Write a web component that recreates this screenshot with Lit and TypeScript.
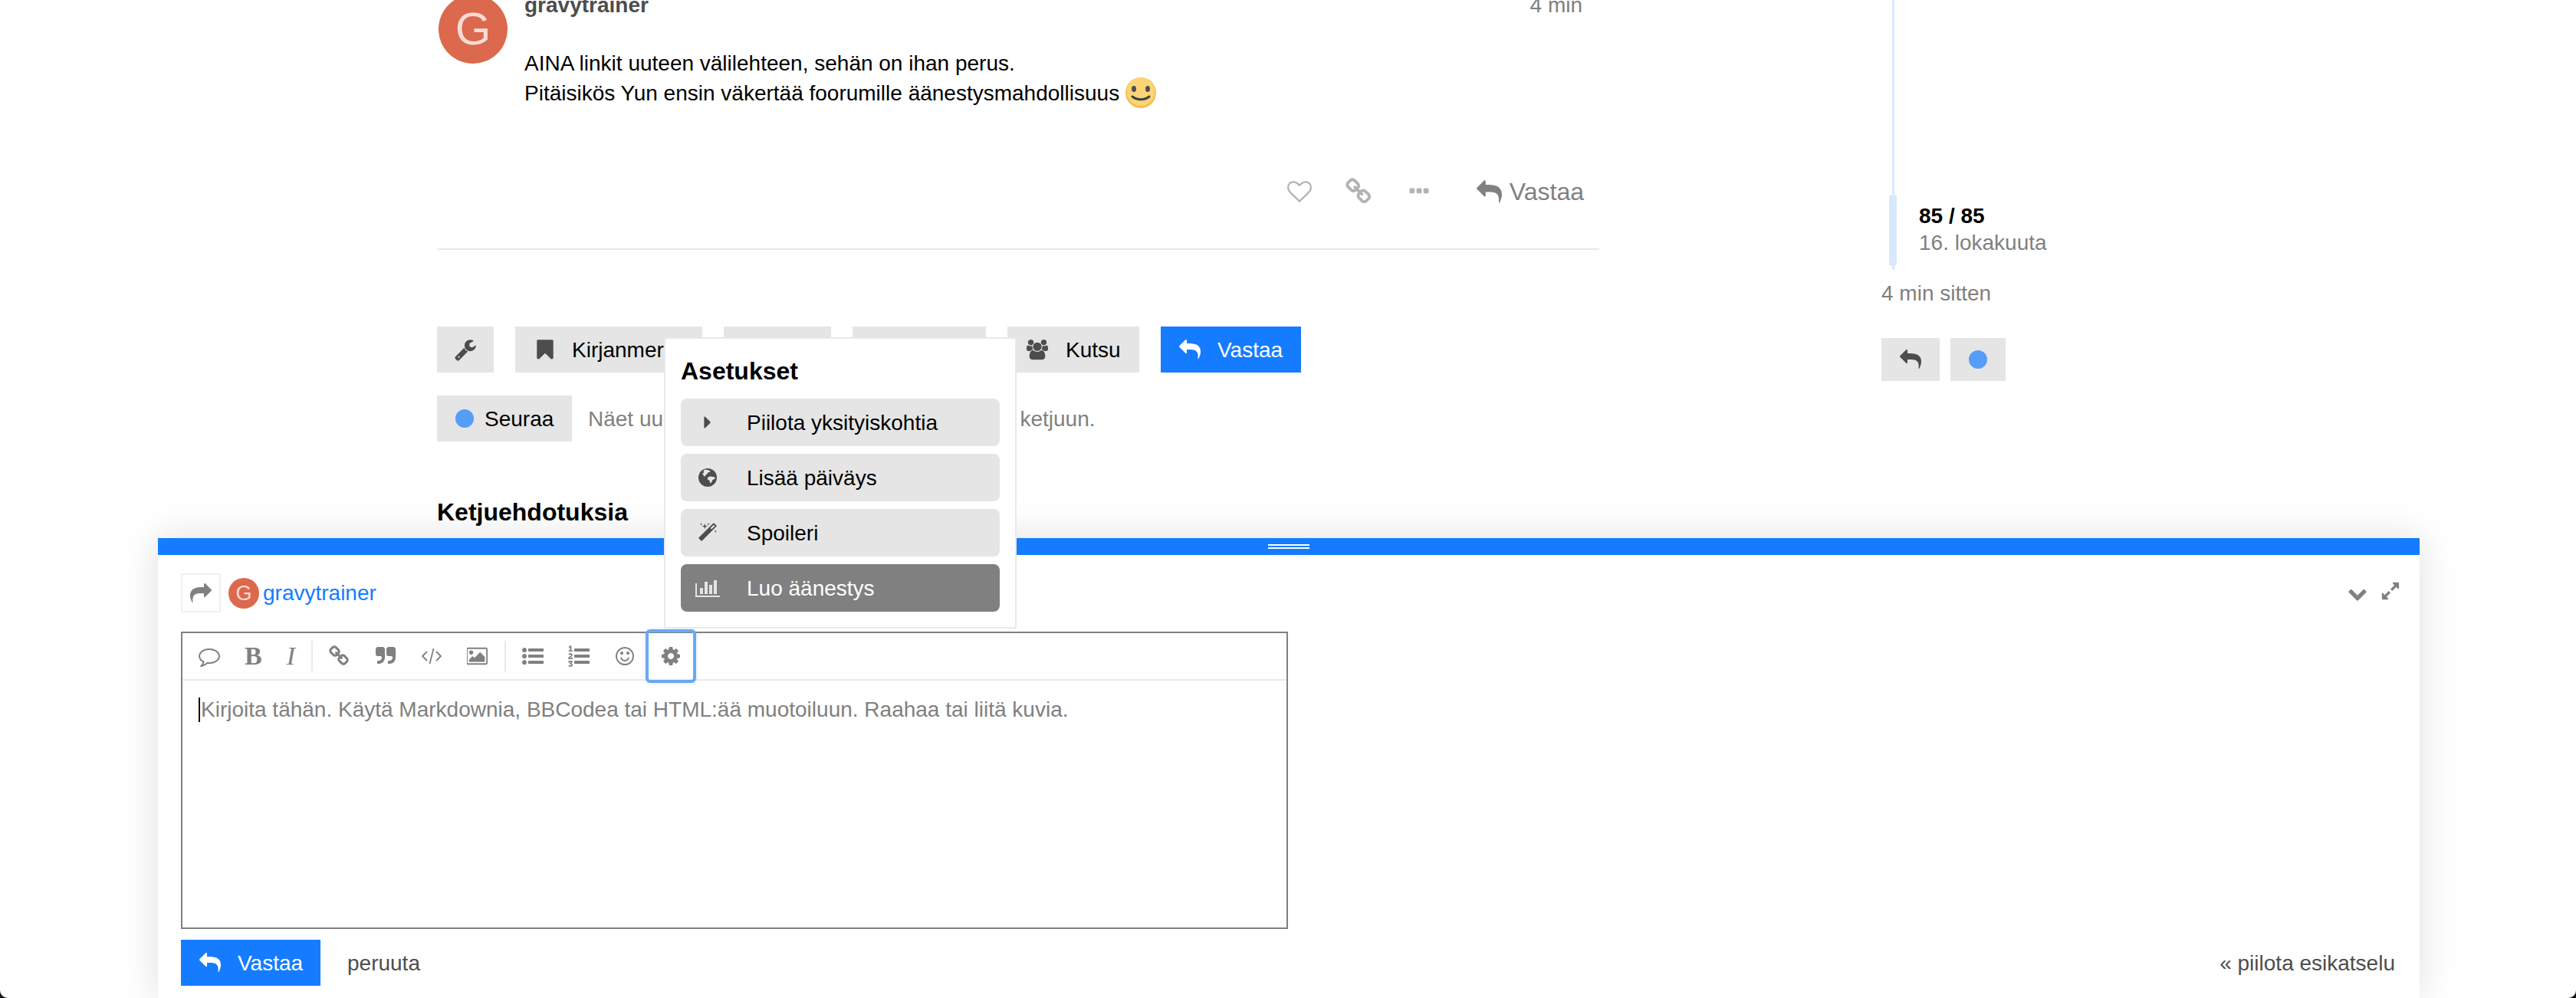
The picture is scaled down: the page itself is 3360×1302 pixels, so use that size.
import { LitElement, html, css } from 'lit';
import { customElement } from 'lit/decorators.js';

// Font Awesome 4 style glyphs, all on a 1792 grid unless a viewBox is given
const ICONS: Record<string, string> = {
  reply: 'M1792 1120q0 166-127 451-3 7-10.5 24t-13.5 30-13 22q-12 17-28 17-15 0-23.5-10t-8.5-25q0-9 2.5-26.5t2.5-23.5q5-68 5-123 0-101-17.5-181t-48.5-138.5-80-101-105.5-69.5-133-42.5-154-21.5-175.5-6h-224v256q0 26-19 45t-45 19-45-19l-512-512q-19-19-19-45t19-45l512-512q19-19 45-19t45 19 19 45v256h224q713 0 875 403 53 134 53 333z',
  share: 'M1792 640q0 26-19 45l-512 512q-19 19-45 19t-45-19-19-45v-256h-224q-98 0-175.5 6t-154 21.5-133 42.5-105.5 69.5-80 101-48.5 138.5-17.5 181q0 55 5 123 0 6 2.5 23.5t2.5 26.5q0 15-8.5 25t-23.5 10q-16 0-28-17-7-9-13-22t-13.5-30-10.5-24q-127-285-127-451 0-199 53-333 162-403 875-403h224v-256q0-26 19-45t45-19 45 19l512 512q19 19 19 45z',
  bookmark: 'M1420 128q23 0 44 9 33 13 52.5 41t19.5 62v1289q0 34-19.5 62t-52.5 41q-19 8-44 8-48 0-83-32l-441-424-441 424q-36 33-83 33-23 0-44-9-33-13-52.5-41t-19.5-62v-1289q0-34 19.5-62t52.5-41q21-9 44-9h1048z',
  wrench: 'M448 1472q0-26-19-45t-45-19-45 19-19 45 19 45 45 19 45-19 19-45zm644-420l-682 682q-37 37-90 37-52 0-91-37l-106-108q-38-36-38-90 0-53 38-91l681-681q39 98 114.5 173.5t173.5 114.5zm634-435q0 39-23 106-47 134-164.5 217.5t-258.5 83.5q-185 0-316.5-131.5t-131.5-316.5 131.5-316.5 316.5-131.5q58 0 121.5 16.5t107.5 46.5q16 11 16 28t-16 28l-293 169v224l193 107q5-3 79-48.5t135.5-81 70.5-35.5q15 0 23.5 10t8.5 25z',
  users: 'M529 896q-162 5-265 128h-134q-82 0-138-40.5t-56-118.5q0-353 124-353 6 0 43.5 21t97.5 42.5 119 21.5q67 0 133-23-5 37-5 66 0 139 81 256zm1071 637q0 120-73 189.5t-194 69.5h-874q-121 0-194-69.5t-73-189.5q0-53 3.5-103.5t14-109 26.5-108.5 43-97.5 62-81 85.5-53.5 111.5-20q10 0 43 21.5t73 48 107 48 135 21.5 135-21.5 107-48 73-48 43-21.5q61 0 111.5 20t85.5 53.5 62 81 43 97.5 26.5 108.5 14 109 3.5 103.5zm-1024-1277q0 106-75 181t-181 75-181-75-75-181 75-181 181-75 181 75 75 181zm704 384q0 159-112.5 271.5t-271.5 112.5-271.5-112.5-112.5-271.5 112.5-271.5 271.5-112.5 271.5 112.5 112.5 271.5zm576 225q0 78-56 118.5t-138 40.5h-134q-103-123-265-128 81-117 81-256 0-29-5-66 66 23 133 23 59 0 119-21.5t97.5-42.5 43.5-21q124 0 124 353zm-128-609q0 106-75 181t-181 75-181-75-75-181 75-181 181-75 181 75 75 181z',
  link: 'M1456 1216q0-40-28-68l-208-208q-28-28-68-28-42 0-72 32 3 3 19 18.5t21.5 21.5 15 19 13 25.5 3.5 27.5q0 40-28 68t-68 28q-15 0-27.5-3.5t-25.5-13-19-15-21.5-21.5-18.5-19q-33 31-33 73 0 40 28 68l206 207q27 27 68 27 40 0 68-26l147-146q28-28 28-67zm-703-705q0-40-28-68l-206-207q-28-28-68-28-39 0-68 27l-147 146q-28 28-28 67 0 40 28 68l208 208q27 27 68 27 42 0 72-31-3-3-19-18.5t-21.5-21.5-15-19-13-25.5-3.5-27.5q0-40 28-68t68-28q15 0 27.5 3.5t25.5 13 19 15 21.5 21.5 18.5 19q33-31 33-73zm895 705q0 120-85 203l-147 146q-83 83-203 83-121 0-204-85l-206-207q-83-83-83-203 0-123 88-209l-88-88q-86 88-208 88-120 0-204-84l-208-208q-84-84-84-204t85-203l147-146q83-83 203-83 121 0 204 85l206 207q83 83 83 203 0 123-88 209l88 88q86-88 208-88 120 0 204 84l208 208q84 84 84 204z',
  quote: 'M832 320v704q0 104-40.5 198.5t-109.5 163.5-163.5 109.5-198.5 40.5h-64q-26 0-45-19t-19-45v-128q0-26 19-45t45-19h64q106 0 181-75t75-181v-32q0-40-28-68t-68-28h-224q-80 0-136-56t-56-136v-384q0-80 56-136t136-56h384q80 0 136 56t56 136zm896 0v704q0 104-40.5 198.5t-109.5 163.5-163.5 109.5-198.5 40.5h-64q-26 0-45-19t-19-45v-128q0-26 19-45t45-19h64q106 0 181-75t75-181v-32q0-40-28-68t-68-28h-224q-80 0-136-56t-56-136v-384q0-80 56-136t136-56h384q80 0 136 56t56 136z',
  cog: 'M1152 896q0-106-75-181t-181-75-181 75-75 181 75 181 181 75 181-75 75-181zm512-109v222q0 12-8 23t-20 13l-185 28q-19 54-39 91 35 50 107 138 10 12 10 25t-9 23q-27 37-99 108t-94 71q-12 0-26-9l-138-108q-44 23-91 38-16 136-29 186-7 28-36 28h-222q-14 0-24.5-8.5t-11.5-21.5l-28-184q-49-16-90-37l-141 107q-10 9-25 9-14 0-25-11-126-114-165-168-7-10-7-23 0-12 8-23 15-21 51-66.5t54-70.5q-27-50-41-99l-183-27q-13-2-21-12.5t-8-23.5v-222q0-12 8-23t19-13l186-28q14-46 39-92-40-57-107-138-10-12-10-24 0-10 9-23 26-36 98.5-107.5t94.5-71.5q13 0 26 10l138 107q44-23 91-38 16-136 29-186 7-28 36-28h222q14 0 24.5 8.5t11.5 21.5l28 184q49 16 90 37l142-107q9-9 24-9 13 0 25 10 129 119 165 170 7 8 7 22 0 12-8 23-15 21-51 66.5t-54 70.5q26 50 41 98l183 28q13 2 21 12.5t8 23.5z',
  chevron: 'M1683 808l-742 741q-19 19-45 19t-45-19l-742-741q-19-19-19-45.5t19-45.5l166-165q19-19 45-19t45 19l531 531 531-531q19-19 45-19t45 19l166 165q19 19 19 45.5t-19 45.5z',
  caret: 'M1152 896q0 26-19 45l-448 448q-19 19-45 19t-45-19-19-45v-896q0-26 19-45t45-19 45 19l448 448q19 19 19 45z',
  magic: 'M1254 581l293-293-107-107-293 293zm447-293q0 27-18 45l-1286 1286q-18 18-45 18t-45-18l-198-198q-18-18-18-45t18-45l1286-1286q18-18 45-18t45 18l198 198q18 18 18 45zm-1351-190l98 30-98 30-30 98-30-98-98-30 98-30 30-98zm350 162l196 60-196 60-60 196-60-196-196-60 196-60 60-196zm930 478l98 30-98 30-30 98-30-98-98-30 98-30 30-98zm-640-640l98 30-98 30-30 98-30-98-98-30 98-30 30-98z',
  chart: 'M640 896v512h-256v-512h256zm384-512v1024h-256v-1024h256zm1024 1152v128h-2048v-1152h128v1024h1920zm-640-896v768h-256v-768h256zm384-384v1152h-256v-1152h256z',
  comment: 'M896 384q-204 0-381.5 69.5t-282 187.5-104.5 255q0 112 71.5 213.5t201.5 175.5l87 50-27 96q-24 91-70 172 152-63 275-171l43-38 57 6q69 8 130 8 204 0 381.5-69.5t282-187.5 104.5-255-104.5-255-282-187.5-381.5-69.5zm896 512q0 174-120 321.5t-326 233-450 85.5q-70 0-145-8-198 175-460 242-49 14-114 22h-5q-15 0-27-10.5t-16-27.5v-1q-3-4-.5-12t2-10 4.5-9.5l6-9 7-8.5 8-9q7-8 31-34.5t34.5-38 31-39.5 32.5-51 27-59 26-76q-157-89-247.5-220t-90.5-281q0-174 120-321.5t326-233 450-85.5 450 85.5 326 233 120 321.5z',
  image: 'M576 576q0 80-56 136t-136 56-136-56-56-136 56-136 136-56 136 56 56 136zm1024 384v448h-1408v-192l320-320 160 160 512-512zm96-704h-1600q-13 0-22.5 9.5t-9.5 22.5v1216q0 13 9.5 22.5t22.5 9.5h1600q13 0 22.5-9.5t9.5-22.5v-1216q0-13-9.5-22.5t-22.5-9.5zm160 32v1216q0 66-47 113t-113 47h-1600q-66 0-113-47t-47-113v-1216q0-66 47-113t113-47h1600q66 0 113 47t47 113z',
  listUl: 'M384 1408q0 80-56 136t-136 56-136-56-56-136 56-136 136-56 136 56 56 136zm0-512q0 80-56 136t-136 56-136-56-56-136 56-136 136-56 136 56 56 136zm1408 416v192q0 13-9.5 22.5t-22.5 9.5h-1216q-13 0-22.5-9.5t-9.5-22.5v-192q0-13 9.5-22.5t22.5-9.5h1216q13 0 22.5 9.5t9.5 22.5zm-1408-928q0 80-56 136t-136 56-136-56-56-136 56-136 136-56 136 56 56 136zm1408 416v192q0 13-9.5 22.5t-22.5 9.5h-1216q-13 0-22.5-9.5t-9.5-22.5v-192q0-13 9.5-22.5t22.5-9.5h1216q13 0 22.5 9.5t9.5 22.5zm0-512v192q0 13-9.5 22.5t-22.5 9.5h-1216q-13 0-22.5-9.5t-9.5-22.5v-192q0-13 9.5-22.5t22.5-9.5h1216q13 0 22.5 9.5t9.5 22.5z',
  listOl: 'M381 1620q0 80-54.5 126t-135.5 46q-106 0-172-66l57-88q49 45 106 45 29 0 50.5-14.5t21.5-42.5q0-64-105-56l-26-56q8-10 32.5-43.5t42.5-54 37-38.5v-1q-16 0-48.5 1t-48.5 1v53h-106v-152h333v88l-95 115q51 12 81 49t30 88zm2-627v159h-362q-6-36-6-54 0-51 23.5-93t56.5-68 66-47.5 56.5-43.5 23.5-45q0-25-14.5-38.5t-39.5-13.5q-46 0-81 58l-85-59q24-51 71.5-79.5t105.5-28.5q73 0 123 41.5t50 112.5q0 50-34 91.5t-75 64.5-75.5 50.5-35.5 52.5h127v-60h105zm1409 319v192q0 13-9.5 22.5t-22.5 9.5h-1216q-13 0-22.5-9.5t-9.5-22.5v-192q0-13 9.5-22.5t22.5-9.5h1216q13 0 22.5 9.5t9.5 22.5zm-1408-899v99h-335v-99h107q0-41 .5-122t.5-121v-12h-2q-8 17-50 54l-71-76 136-127h106v404h108zm1408 387v192q0 13-9.5 22.5t-22.5 9.5h-1216q-13 0-22.5-9.5t-9.5-22.5v-192q0-13 9.5-22.5t22.5-9.5h1216q13 0 22.5 9.5t9.5 22.5zm0-512v192q0 13-9.5 22.5t-22.5 9.5h-1216q-13 0-22.5-9.5t-9.5-22.5v-192q0-13 9.5-22.5t22.5-9.5h1216q13 0 22.5 9.5t9.5 22.5z',
  smile: 'M1262 1075q-37 121-138 195t-228 74-228-74-138-195q-8-25 4-48.5t38-31.5q25-8 48.5 4t31.5 38q25 80 92.5 129.5t151.5 49.5 151.5-49.5 92.5-129.5q8-26 32-38t49-4 37 31.5 4 48.5zm-494-435q0 53-37.5 90.5t-90.5 37.5-90.5-37.5-37.5-90.5 37.5-90.5 90.5-37.5 90.5 37.5 37.5 90.5zm512 0q0 53-37.5 90.5t-90.5 37.5-90.5-37.5-37.5-90.5 37.5-90.5 90.5-37.5 90.5 37.5 37.5 90.5zm256 256q0-130-51-248.5t-136.5-204-204-136.5-248.5-51-248.5 51-204 136.5-136.5 204-51 248.5 51 248.5 136.5 204 204 136.5 248.5 51 248.5-51 204-136.5 136.5-204 51-248.5zm128 0q0 209-103 385.5t-279.5 279.5-385.5 103-385.5-103-279.5-279.5-103-385.5 103-385.5 279.5-279.5 385.5-103 385.5 103 279.5 279.5 103 385.5z',
  heart: 'M1664 596q0-81-21.5-143t-55-98.5-81.5-59.5-94-31-98-8-112 25.5-110.5 64-86.5 72-60 61.5q-18 22-49 22t-49-22q-24-28-60-61.5t-86.5-72-110.5-64-112-25.5-98 8-94 31-81.5 59.5-55 98.5-21.5 143q0 168 187 355l581 560 580-559q188-188 188-356zm128 0q0 221-229 450l-623 600q-18 18-44 18t-44-18l-624-601q-10-8-27.5-26t-55.5-65.5-68-97.5-53.5-121-23.5-138q0-220 127-344t351-124q62 0 126.5 21.5t120 58 95.5 68.5 76 68q36-36 76-68t95.5-68.5 120-58 126.5-21.5q224 0 351 124t127 344z',
  dots: 'M576 736v192q0 40-28 68t-68 28h-192q-40 0-68-28t-28-68v-192q0-40 28-68t68-28h192q40 0 68 28t28 68zm512 0v192q0 40-28 68t-68 28h-192q-40 0-68-28t-28-68v-192q0-40 28-68t68-28h192q40 0 68 28t28 68zm512 0v192q0 40-28 68t-68 28h-192q-40 0-68-28t-28-68v-192q0-40 28-68t68-28h192q40 0 68 28t28 68z',
  expand: 'M883 1056q0 13-10 23l-332 332 144 144q19 19 19 45t-19 45-45 19h-448q-26 0-45-19t-19-45v-448q0-26 19-45t45-19 45 19l144 144 332-332q10-10 23-10t23 10l114 114q10 10 10 23zm781-864v448q0 26-19 45t-45 19-45-19l-144-144-332 332q-10 10-23 10t-23-10l-114-114q-10-10-10-23t10-23l332-332-144-144q-19-19-19-45t19-45 45-19h448q26 0 45 19t19 45z',
};

const fa = (name: string, cls = '', viewBox = '0 0 1792 1792') => html`
  <svg class="fa ${cls}" viewBox=${viewBox} aria-hidden="true"><path d=${ICONS[name]}></path></svg>
`;

const globe = html`
  <svg class="globe" viewBox="0 0 24 24" aria-hidden="true">
    <circle cx="12" cy="12" r="12" fill="#4d4d4d"></circle>
    <path fill="#e5e5e5" d="M8 1.5l4 .5 3.500 1.500-1 1.500-2.500.5-.5 2-2 1-.5 1.500-2 .5-.5-2-1.500-1 2-2-.5-1.500zM12 12l3-1.500 4 .5 3 1-1 2-2.500 1-1 2.500-1.500 2-1-1-.5-2.500-2.500-1.500z"></path>
  </svg>
`;

const smiley = html`
  <svg class="emoji" viewBox="0 0 40 40" aria-hidden="true">
    <circle cx="20" cy="20" r="20" fill="#f6bf50"></circle>
    <circle cx="20" cy="18.500" r="18.500" fill="#fbd476"></circle>
    <ellipse cx="11" cy="15" rx="3" ry="4" fill="#4a4f57"></ellipse>
    <ellipse cx="29" cy="15" rx="3" ry="4" fill="#4a4f57"></ellipse>
    <path d="M9 25c6 5 16 5 22 0" fill="none" stroke="#3c3f45" stroke-width="3" stroke-linecap="round"></path>
  </svg>
`;

@customElement('app-root')
export class AppRoot extends LitElement {
  static styles = css`
    :host {
      display: block;
      background: #111;
      font-family: 'Liberation Sans', Arial, sans-serif;
      font-size: 28px;
      line-height: 39px;
      color: #000;
    }

    .page {
      position: relative;
      height: 1302px;
      overflow: hidden;
      background: #fff;
      border-radius: 0 0 10px 10px;
    }

    .fa {
      display: block;
      width: 28px;
      height: 28px;
      fill: currentColor;
      flex: none;
    }

    .layout {
      display: flex;
      align-items: flex-start;
      padding-left: 570px;
    }

    /* post column */
    .topic {
      width: 1516px;
      flex: none;
    }

    .post {
      display: grid;
      grid-template-columns: 90px 1fr;
      column-gap: 22px;
      margin: -7px 0 0 2px;
    }

    .avatar {
      width: 90px;
      height: 90px;
      border-radius: 50%;
      background: #dc684d;
      color: #f8dcd5;
      font-size: 60px;
      line-height: 90px;
      text-align: center;
    }

    .post-head {
      display: flex;
      justify-content: space-between;
      margin: -6px 22px 0 0;
    }

    .post-name {
      font-weight: 700;
      color: #4d4d4d;
    }

    .post-age {
      color: #808080;
    }

    .post-body {
      margin: 37px 0 0;
    }

    .post-body p {
      margin: 0;
    }

    .emoji {
      width: 40px;
      height: 40px;
      vertical-align: -10px;
      margin-top: -4px;
    }

    .post-actions {
      display: flex;
      align-items: center;
      justify-content: flex-end;
      height: 44px;
      margin-top: 87px;
      padding-right: 20px;
      color: #b3b3b3;
    }

    .post-action {
      display: flex;
      justify-content: center;
      width: 78px;
    }

    .post-action .fa {
      width: 32px;
      height: 32px;
    }

    .post-action .link {
      width: 36px;
      height: 36px;
    }

    .post-reply {
      display: flex;
      align-items: center;
      gap: 10px;
      margin-left: 36px;
      color: #808080;
      font-size: 32px;
    }

    .post-reply .fa {
      width: 33px;
      height: 33px;
    }

    .divider {
      height: 2px;
      margin-top: 52px;
      background: #e9e9e9;
    }

    .topic-buttons {
      display: flex;
      gap: 28px;
      margin-top: 100px;
    }

    .btn {
      display: flex;
      align-items: center;
      gap: 20px;
      height: 60px;
      padding: 0 24px;
      background: #e5e5e5;
      color: #000;
      box-sizing: border-box;
    }

    .btn .fa {
      color: #4d4d4d;
      width: 30px;
      height: 30px;
    }

    .btn-primary {
      background: #157cff;
      color: #fff;
      gap: 22px;
    }

    .btn-primary .fa {
      color: #fff;
      width: 28px;
      height: 28px;
    }

    .btn-bookmark { width: 244px; }
    .btn-share { width: 140px; }
    .btn-flag { width: 174px; }
    .btn-invite { width: 172px; gap: 22px; }
    .btn-wrench { width: 74px; padding: 0 22px; }

    .notify {
      display: flex;
      align-items: center;
      gap: 21px;
      margin-top: 30px;
      color: #808080;
    }

    .notify .btn {
      gap: 14px;
      width: 176px;
    }

    .dot {
      width: 24px;
      height: 24px;
      border-radius: 50%;
      background: #559ef8;
      flex: none;
    }

    .suggested {
      margin: 0;
      margin-top: 72px;
      font-size: 32px;
      font-weight: 700;
      line-height: 40px;
    }

    /* timeline */
    .timeline {
      margin-left: 368px;
      width: 260px;
      flex: none;
      color: #808080;
    }

    .scroller {
      display: grid;
      grid-template-columns: 10px 1fr;
      column-gap: 29px;
      margin-left: 10px;
      height: 352px;
    }

    .track {
      display: flex;
      flex-direction: column;
      align-items: center;
    }

    .track-line {
      width: 3px;
      height: 254px;
      background: #d9e9fc;
    }

    .track-handle {
      width: 10px;
      height: 93px;
      border-radius: 4px;
      background: #d9e9fc;
      flex: none;
    }

    .track-end {
      width: 3px;
      height: 5px;
      background: #d9e9fc;
    }

    .scroll-info {
      padding-top: 262px;
    }

    .scroll-count {
      font-weight: 700;
      color: #000;
    }

    .scroll-date {
      margin-top: -4px;
    }

    .ago {
      margin-top: 11px;
    }

    .timeline-controls {
      display: flex;
      gap: 14px;
      margin-top: 39px;
    }

    .tl-btn {
      display: flex;
      align-items: center;
      justify-content: center;
      width: 76px;
      height: 56px;
      background: #e5e5e5;
      color: #4d4d4d;
    }

    .tl-btn + .tl-btn {
      width: 72px;
    }

    /* composer */
    .composer {
      position: absolute;
      left: 206px;
      right: 204px;
      bottom: 0;
      height: 600px;
      background: #fff;
      box-shadow: 0 0 48px rgba(0, 0, 0, 0.13);
    }

    .grippie {
      display: flex;
      flex-direction: column;
      align-items: center;
      justify-content: center;
      gap: 2px;
      height: 22px;
      background: #157cff;
    }

    .grippie i {
      display: block;
      width: 54px;
      height: 2px;
      background: #fff;
    }

    .composer-body {
      padding: 24px 25px 0 30px;
    }

    .reply-head {
      display: flex;
      align-items: center;
      height: 51px;
    }

    .reply-to {
      display: flex;
      align-items: center;
      justify-content: center;
      width: 52px;
      height: 51px;
      box-sizing: border-box;
      border: 2px solid #f0f0f0;
      color: #808080;
    }

    .reply-avatar {
      width: 40px;
      height: 40px;
      margin-left: 10px;
      border-radius: 50%;
      background: #dc684d;
      color: #f8dcd5;
      font-size: 27px;
      line-height: 40px;
      text-align: center;
    }

    .reply-user {
      margin-left: 5px;
      color: #157cff;
    }

    .composer-controls {
      display: flex;
      align-items: center;
      gap: 17px;
      margin-left: auto;
      color: #808080;
    }

    .composer-controls .chevron {
      width: 26px;
      height: 26px;
    }

    .composer-controls .expand {
      width: 26px;
      height: 26px;
      margin-top: -6px;
    }

    .editor {
      width: 1444px;
      height: 388px;
      margin-top: 25px;
      box-sizing: border-box;
      border: 2px solid #808080;
    }

    .toolbar {
      display: flex;
      align-items: center;
      height: 60px;
      padding-left: 5px;
      border-bottom: 2px solid #e9e9e9;
      color: #808080;
    }

    .tool {
      display: flex;
      align-items: center;
      justify-content: center;
      height: 60px;
      padding: 0 16px;
    }

    .tool .fa {
      width: 28px;
      height: 28px;
    }

    .tool-text {
      font-family: 'Liberation Serif', 'Times New Roman', serif;
      font-size: 34px;
      line-height: 1;
    }

    .tool-bold {
      font-weight: 700;
    }

    .tool-italic {
      font-style: italic;
    }

    .tool-code {
      width: 28px;
      height: 28px;
      fill: none;
      stroke: currentColor;
      stroke-width: 1.800;
    }

    .tool-focus {
      outline: 4px solid #6aa8f6;
      outline-offset: -1px;
      border-radius: 3px;
      box-shadow: 0 0 4px 3px rgba(106, 168, 246, 0.3);
      height: 64px;
    }

    .tool-sep {
      width: 2px;
      height: 40px;
      margin: 0 5px;
      background: #e9e9e9;
      flex: none;
    }

    .placeholder {
      display: flex;
      align-items: center;
      gap: 1px;
      padding: 18px 0 0 21px;
      color: #808080;
    }

    .caret {
      width: 2px;
      height: 32px;
      background: #000;
      flex: none;
    }

    .composer-foot {
      display: flex;
      align-items: center;
      margin-top: 14px;
    }

    .composer-foot .btn {
      width: 182px;
    }

    .cancel {
      margin-left: 35px;
      color: #4d4d4d;
    }

    .preview-toggle {
      margin-left: auto;
      padding-right: 7px;
      color: #4d4d4d;
    }

    /* options popup */
    .popup {
      position: absolute;
      left: 866px;
      top: 440px;
      width: 460px;
      height: 380px;
      box-sizing: border-box;
      border: 2px solid #e9e9e9;
      padding: 23px 20px 0;
      background: #fff;
    }

    .popup h3 {
      margin: 0 0 16px;
      font-size: 32px;
      line-height: 39px;
      font-weight: 700;
    }

    .popup-list {
      display: flex;
      flex-direction: column;
      gap: 10px;
    }

    .popup-item {
      display: grid;
      grid-template-columns: 86px 1fr;
      align-items: center;
      height: 62px;
      border-radius: 8px;
      background: #e5e5e5;
      color: #000;
    }

    .popup-icon {
      display: flex;
      justify-content: center;
      color: #4d4d4d;
      padding-right: 16px;
    }

    .popup-item.active {
      background: #808080;
      color: #fff;
    }

    .popup-item.active .popup-icon {
      color: #e5e5e5;
    }

    .popup-icon .fa {
      width: 26px;
      height: 26px;
    }

    .popup-icon .chart {
      width: 32px;
      height: 28px;
    }

    .globe {
      display: block;
      width: 24px;
      height: 24px;
    }
  `;

  render() {
    return html`
      <div class="page">
        <div class="layout">
          <main class="topic">
            <article class="post">
              <div class="avatar">G</div>
              <div>
                <div class="post-head">
                  <span class="post-name">gravytrainer</span>
                  <span class="post-age">4 min</span>
                </div>
                <div class="post-body">
                  <p>AINA linkit uuteen välilehteen, sehän on ihan perus.</p>
                  <p>Pitäisikös Yun ensin väkertää foorumille äänestysmahdollisuus ${smiley}</p>
                </div>
              </div>
            </article>
            <div class="post-actions">
              <span class="post-action">${fa('heart')}</span>
              <span class="post-action">${fa('link', 'link')}</span>
              <span class="post-action">${fa('dots')}</span>
              <span class="post-reply">${fa('reply')}Vastaa</span>
            </div>
            <div class="divider"></div>
            <div class="topic-buttons">
              <span class="btn btn-wrench">${fa('wrench')}</span>
              <span class="btn btn-bookmark">${fa('bookmark')}Kirjanmerkki</span>
              <span class="btn btn-share">Jaa</span>
              <span class="btn btn-flag">Liputa</span>
              <span class="btn btn-invite">${fa('users', '', '-128 0 2048 1792')}Kutsu</span>
              <span class="btn btn-primary">${fa('reply')}Vastaa</span>
            </div>
            <div class="notify">
              <span class="btn"><span class="dot"></span>Seuraa</span>
              <span>Näet uudet vastaukset, koska olet kirjoittanut ketjuun.</span>
            </div>
            <h2 class="suggested">Ketjuehdotuksia</h2>
          </main>
          <aside class="timeline">
            <div class="scroller">
              <div class="track">
                <div class="track-line"></div>
                <div class="track-handle"></div>
                <div class="track-end"></div>
              </div>
              <div class="scroll-info">
                <div class="scroll-count">85 / 85</div>
                <div class="scroll-date">16. lokakuuta</div>
              </div>
            </div>
            <div class="ago">4 min sitten</div>
            <div class="timeline-controls">
              <span class="tl-btn">${fa('reply')}</span>
              <span class="tl-btn"><span class="dot"></span></span>
            </div>
          </aside>
        </div>

        <section class="composer">
          <div class="grippie"><i></i><i></i></div>
          <div class="composer-body">
            <div class="reply-head">
              <span class="reply-to">${fa('share')}</span>
              <span class="reply-avatar">G</span>
              <span class="reply-user">gravytrainer</span>
              <span class="composer-controls">
                ${fa('chevron', 'chevron')}
                ${fa('expand', 'expand')}
              </span>
            </div>
            <div class="editor">
              <div class="toolbar">
                <span class="tool">${fa('comment')}</span>
                <span class="tool tool-text tool-bold">B</span>
                <span class="tool tool-text tool-italic">I</span>
                <span class="tool-sep"></span>
                <span class="tool">${fa('link')}</span>
                <span class="tool">${fa('quote')}</span>
                <span class="tool">
                  <svg class="tool-code" viewBox="0 0 28 28" aria-hidden="true">
                    <path d="M8 8l-6 6 6 6M20 8l6 6-6 6M16.500 4l-5 20"></path>
                  </svg>
                </span>
                <span class="tool">${fa('image', '', '0 0 1920 1792')}</span>
                <span class="tool-sep"></span>
                <span class="tool">${fa('listUl')}</span>
                <span class="tool">${fa('listOl')}</span>
                <span class="tool">${fa('smile')}</span>
                <span class="tool tool-focus">${fa('cog')}</span>
              </div>
              <div class="placeholder">
                <span class="caret"></span>
                <span>Kirjoita tähän. Käytä Markdownia, BBCodea tai HTML:ää muotoiluun. Raahaa tai liitä kuvia.</span>
              </div>
            </div>
            <div class="composer-foot">
              <span class="btn btn-primary">${fa('reply')}Vastaa</span>
              <span class="cancel">peruuta</span>
              <span class="preview-toggle">« piilota esikatselu</span>
            </div>
          </div>
        </section>

        <div class="popup">
          <h3>Asetukset</h3>
          <div class="popup-list">
            <div class="popup-item"><span class="popup-icon">${fa('caret')}</span>Piilota yksityiskohtia</div>
            <div class="popup-item"><span class="popup-icon">${globe}</span>Lisää päiväys</div>
            <div class="popup-item"><span class="popup-icon">${fa('magic')}</span>Spoileri</div>
            <div class="popup-item active"><span class="popup-icon">${fa('chart', 'chart', '0 0 2048 1792')}</span>Luo äänestys</div>
          </div>
        </div>
      </div>
    `;
  }
}
